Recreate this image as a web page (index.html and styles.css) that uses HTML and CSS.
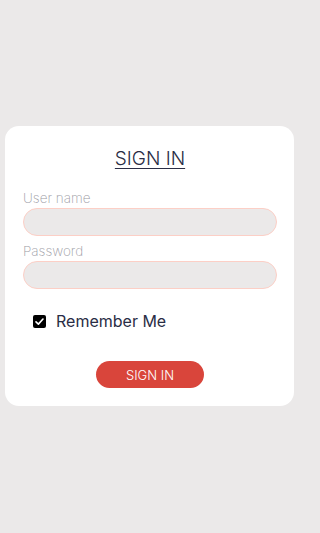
FILE: index.html
```html
<!DOCTYPE html>
<html lang="en">
<head>
<meta charset="utf-8">
<title>Sign In</title>
<link rel="stylesheet" href="styles.css">
</head>
<body>
<main class="card">
  <h1 class="title">SIGN IN</h1>
  <label class="label" for="user">User name</label>
  <input class="field" id="user" type="text">
  <label class="label label-second" for="pass">Password</label>
  <input class="field" id="pass" type="password">
  <div class="remember">
    <span class="check">
      <svg viewBox="0 0 13 13" width="13" height="13"><path d="M3 6.8 L5.4 9.1 L10 4" fill="none" stroke="#fff" stroke-width="1.6" stroke-linecap="round" stroke-linejoin="round"/></svg>
    </span>
    <span class="remember-text">Remember Me</span>
  </div>
  <div class="actions">
    <button class="btn" type="button">SIGN IN</button>
  </div>
</main>
</body>
</html>
```
FILE: styles.css
```css
html, body {
  margin: 0;
  padding: 0;
}
html {
  background: #ebe9e9;
}
body {
  background: #ebe9e9;
  font-family: Inter, "Noto Sans", sans-serif;
  width: 300px;
  height: 533px;
}
.card {
  margin: 126px 6px 0 5px;
  background: #ffffff;
  border-radius: 14px;
  padding: 21px 17px 18px 18px;
  display: flex;
  flex-direction: column;
}
.title {
  margin: 0;
  font-size: 19px;
  line-height: 24px;
  font-weight: 300;
  color: #2a2d45;
  text-align: center;
  text-decoration: underline;
  text-underline-offset: 3px;
  text-decoration-thickness: 1px;
}
.label {
  margin-top: 19px;
  font-size: 13.5px;
  line-height: 17px;
  font-weight: 200;
  color: #9a9aa4;
}
.label-second {
  margin-top: 7px;
}
.field {
  margin: 1px 0 0 0;
  box-sizing: border-box;
  height: 28px;
  width: 100%;
  border: 1px solid #fccfc6;
  border-radius: 14px;
  background: #ebe9e9;
  outline: none;
  padding: 0 12px;
  font-family: inherit;
}
.remember {
  margin-top: 21px;
  display: flex;
  align-items: center;
  gap: 10px;
  padding-left: 10px;
  height: 22px;
}
.check {
  width: 13px;
  height: 13px;
  background: #000;
  border-radius: 2px;
  display: flex;
}
.remember-text {
  font-size: 16px;
  line-height: 22px;
  color: #2a2d45;
}
.actions {
  margin-top: 29px;
  display: flex;
  justify-content: center;
}
.btn {
  width: 108px;
  height: 27px;
  border: none;
  border-radius: 14px;
  background: #d9453b;
  color: #fff;
  font-family: inherit;
  font-size: 13px;
  font-weight: 300;
  padding: 0;
}
```
